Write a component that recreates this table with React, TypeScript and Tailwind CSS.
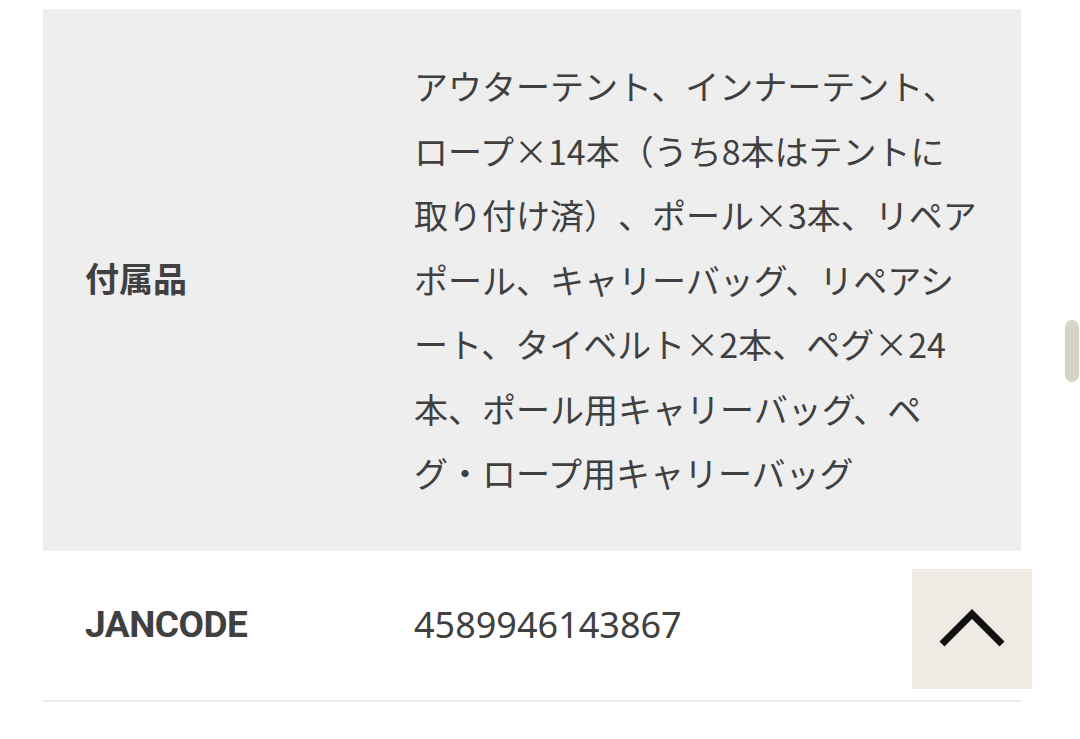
import React from 'react';

const lines = [
    'アウターテント、インナーテント、',
    'ロープ×14本（うち8本はテントに',
    '取り付け済）、ポール×3本、リペア',
    'ポール、キャリーバッグ、リペアシ',
    'ート、タイベルト×2本、ペグ×24',
    '本、ポール用キャリーバッグ、ペ',
    'グ・ロープ用キャリーバッグ',
];

export default function App() {
    return (
        <div
            className="relative w-[1080px] h-[739px] bg-white overflow-hidden text-[#404040]"
            style={{ fontFamily: '"Noto Sans", "Noto Sans CJK JP", sans-serif' }}
        >
            <div className="pt-[9px] pl-[43px] w-[1021px]">
                {/* 付属品 */}
                <div className="flex items-center bg-[#eeeeee] py-[45px]">
                    <div className="w-[371px] pl-[42px] text-[34px] font-bold">付属品</div>
                    <div
                        className="text-[34px] leading-[64.5px] [text-spacing-trim:space-all]"
                        style={{ fontFamily: '"Noto Sans CJK JP", "Noto Sans", sans-serif' }}
                    >
                        {lines.map((l) => (
                            <div key={l} className="whitespace-nowrap">{l}</div>
                        ))}
                    </div>
                </div>

                {/* JANCODE */}
                <div className="flex items-center h-[151px] border-b-2 border-[#ebebeb]">
                    <div className="w-[371px] pl-[42px] text-[37px] font-bold tracking-[-0.5px]" style={{ fontFamily: 'Roboto, sans-serif' }}>
                        JANCODE
                    </div>
                    <div className="text-[36px]">4589946143867</div>
                </div>
            </div>

            {/* ページトップ */}
            <button className="absolute left-[912px] top-[569px] w-[120px] h-[120px] bg-[#efebe4] flex items-center justify-center">
                <svg width="70" height="40" viewBox="0 0 70 40">
                    <path d="M5 35 L35 5 L65 35" fill="none" stroke="#111" strokeWidth="7" />
                </svg>
            </button>

            {/* scrollbar */}
            <div className="absolute left-[1065px] top-[320px] w-[14px] h-[62px] rounded-full bg-[#d8d4c4]" />
        </div>
    );
}
